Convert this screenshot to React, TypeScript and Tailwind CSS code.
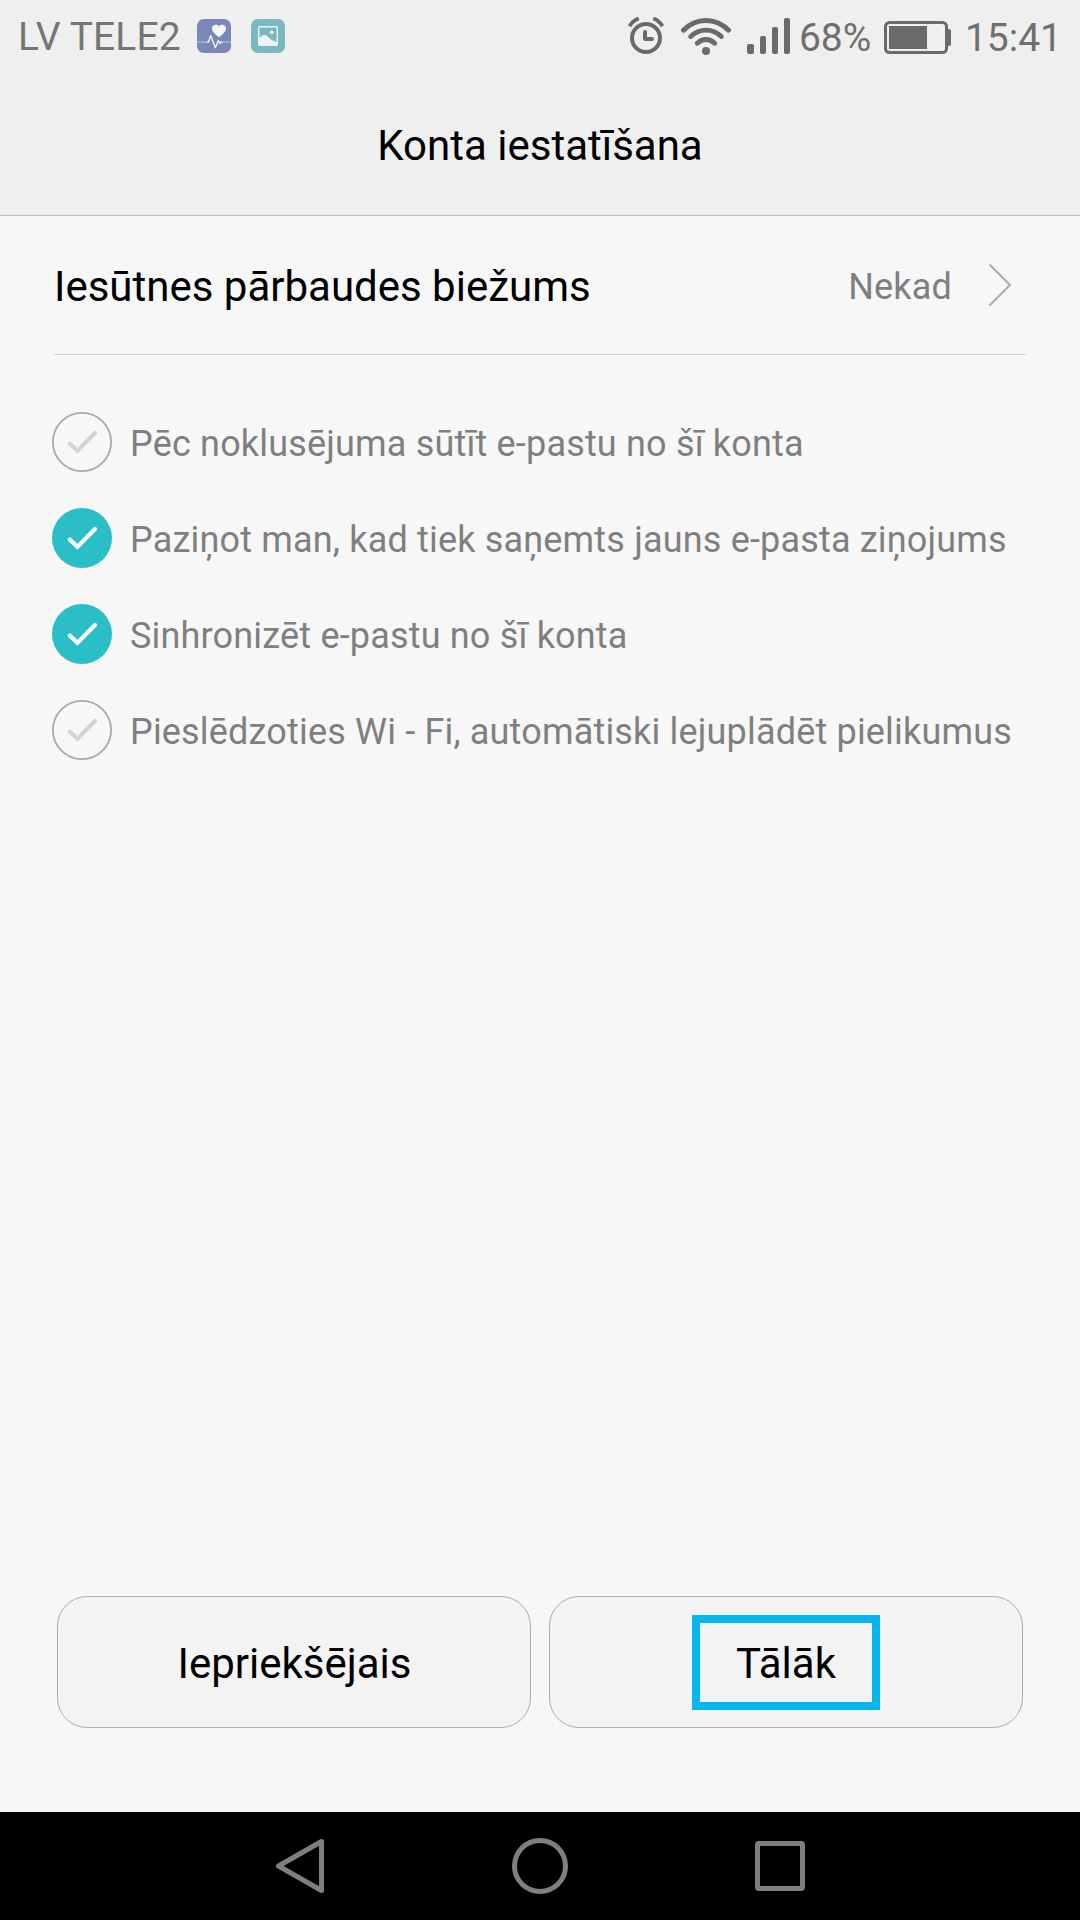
function HealthIcon() {
  return (
    <svg className="h-[34px] w-[34px]" viewBox="0 0 34 34" fill="none">
      <rect width="34" height="34" rx="7" fill="#7a88b8" />
      <path d="M0 23h10M25 23h9" stroke="#a9b3d3" strokeWidth="1.6" />
      <path d="M22 18.500c-3.500-3.200-7-5.500-7-9C15 5.200 20.300 4.700 22 7.200c1.700-2.500 7-2 7 2.300 0 3.500-3.500 5.800-7 9z" fill="#f6f6f8" />
      <path d="M10 23h1.500l2.200-6.500 4.600 12.200 3-7.200 1.600 3 1-1.500h1.500" stroke="#f0f1f6" strokeWidth="1.400" strokeLinejoin="round" />
    </svg>
  );
}

function GalleryIcon() {
  return (
    <svg className="h-[34px] w-[34px]" viewBox="0 0 34 34" fill="none">
      <rect width="34" height="34" rx="7" fill="#78b9bf" />
      <rect x="7.700" y="7.700" width="18.600" height="18.600" rx="1.200" stroke="#f0f4f4" strokeWidth="1.400" />
      <circle cx="20.700" cy="13.300" r="1.900" fill="#f0f4f4" />
      <path d="M8 19.500c2-2.500 4.500-4.500 7-3.200 2 1 3.500 3.500 6 5l5 2V26H8z" fill="#f0f4f4" />
    </svg>
  );
}

function AlarmIcon() {
  return (
    <svg className="mb-px h-[37px] w-[36px]" viewBox="0 0 36 37" fill="none" stroke="#6a6a6a">
      <circle cx="18" cy="21" r="14" strokeWidth="4" />
      <path d="M17 15v6.900h7" strokeWidth="4" strokeLinejoin="round" strokeLinecap="round" />
      <path d="M1.500 9.200C3.600 5.600 6.700 2.900 10.800 1.500M34.500 9.200C32.400 5.600 29.300 2.900 25.200 1.500" strokeWidth="3.800" />
    </svg>
  );
}

function WifiIcon() {
  return (
    <svg className="mt-px h-[37px] w-[50px]" viewBox="0 0 50 37" fill="none" stroke="#6a6a6a" strokeWidth="4.900" strokeLinecap="round">
      <path d="M2.500 12.200C15-.800 35-.800 47.500 12.200" />
      <path d="M9.700 18.500C18.500 10 31.500 10 40.300 18.500" />
      <path d="M16.300 25.200C21.500 20.200 28.500 20.200 33.700 25.200" />
      <circle cx="25" cy="33" r="4" fill="#6a6a6a" stroke="none" />
    </svg>
  );
}

function SignalIcon() {
  return (
    <svg className="h-[36px] w-[43px]" viewBox="0 0 43 36" fill="#6a6a6a">
      <rect x="0" y="26" width="7" height="10" rx="2" />
      <rect x="13" y="18" width="6" height="18" rx="2" />
      <rect x="25" y="9" width="6" height="27" rx="2" />
      <rect x="37" y="0" width="6" height="36" rx="2" />
    </svg>
  );
}

function BatteryIcon() {
  return (
    <svg className="h-[33px] w-[67px]" viewBox="0 0 67 33" fill="none">
      <rect x="1.500" y="1.500" width="61" height="30" rx="4" stroke="#6a6a6a" strokeWidth="3" />
      <rect x="5" y="5" width="38" height="23" fill="#6a6a6a" />
      <path d="M63 8h2q2 0 2 2v13q0 2-2 2h-2z" fill="#6a6a6a" />
    </svg>
  );
}

function CheckCircle({ checked }: { checked: boolean }) {
  return (
    <svg className="h-[60px] w-[60px] shrink-0" viewBox="0 0 60 60" fill="none">
      {checked ? (
        <circle cx="30" cy="30" r="30" fill="#2abfc7" />
      ) : (
        <circle cx="30" cy="30" r="29.100" stroke="#a9a9a9" strokeWidth="1.800" />
      )}
      <path
        d="M17.800 31.500l7.600 7.400 17.600-17.900"
        stroke={checked ? "#ffffff" : "#d4d4d4"}
        strokeWidth="4.200"
        strokeLinecap="round"
      />
    </svg>
  );
}

const options = [
  { label: "Pēc noklusējuma sūtīt e-pastu no šī konta", checked: false },
  { label: "Paziņot man, kad tiek saņemts jauns e-pasta ziņojums", checked: true },
  { label: "Sinhronizēt e-pastu no šī konta", checked: true },
  { label: "Pieslēdzoties Wi - Fi, automātiski lejuplādēt pielikumus", checked: false },
];

export default function App() {
  return (
    <div className="flex h-[1920px] w-[1080px] flex-col overflow-hidden bg-[#f7f7f7] font-['Roboto',sans-serif] whitespace-nowrap text-black">
      <header className="flex h-[216px] shrink-0 flex-col border-b border-[#bdbdbd] bg-[#efefef]">
        <div className="flex h-[72px] items-center pl-[18px] text-[39px] leading-[72px] text-[#757575]">
          <span className="w-[179px] pt-[2px] tracking-[0.1px]">LV TELE2</span>
          <HealthIcon />
          <span className="w-5" />
          <GalleryIcon />
          <div className="ml-auto flex items-center pr-[18px] text-[#6f6f6f]">
            <AlarmIcon />
            <span className="w-[17px]" />
            <WifiIcon />
            <span className="w-4" />
            <SignalIcon />
            <span className="ml-[9px] w-[85px] pt-1">68%</span>
            <span className="pt-[3px]">
              <BatteryIcon />
            </span>
            <span className="ml-[14px] pt-1">15:41</span>
          </div>
        </div>
        <h1 className="flex h-[143px] items-center justify-center pt-[3px] text-[42px]">Konta iestatīšana</h1>
      </header>

      <main className="flex grow flex-col">
        <button className="mx-[54px] flex h-[139px] shrink-0 items-center border-b border-[#cfcfcf] text-left">
          <span className="pt-[2px] text-[42px]">Iesūtnes pārbaudes biežums</span>
          <span className="ml-auto pt-1 text-[36px] tracking-[0.18px] text-[#7f7f7f]">Nekad</span>
          <svg className="mr-[14px] ml-[36px] h-[44px] w-[24px]" viewBox="0 0 24 44" fill="none">
            <path d="M1.500 1.500l20.500 20.500-20.500 20.500" stroke="#ababab" strokeWidth="2" />
          </svg>
        </button>

        <div className="mt-[57px] ml-[52px] flex flex-col gap-9">
          {options.map((o) => (
            <label key={o.label} className="flex h-[60px] items-center">
              <CheckCircle checked={o.checked} />
              <span className="ml-[18px] pt-1 text-[36px] tracking-[0.18px] text-[#7f7f7f]">{o.label}</span>
            </label>
          ))}
        </div>

        <div className="mx-[57px] mt-auto mb-[84px] grid h-[132px] grid-cols-2 gap-[18px] text-[42px]">
          <button className="flex items-center justify-center rounded-[30px] border border-[#adadad] bg-[#f3f3f3] pt-[2px] pl-px">Iepriekšējais</button>
          <button className="flex items-center justify-center rounded-[30px] border border-[#adadad] bg-[#f3f3f3]">
            <span className="flex h-[95px] w-[188px] items-center justify-center border-8 border-[#05b7ed] pt-[3px]">Tālāk</span>
          </button>
        </div>
      </main>

      <nav className="flex h-[108px] shrink-0 items-center justify-between bg-black pr-[272px] pl-[273px]">
        <svg className="h-[56px] w-[54px]" viewBox="0 0 54 56" fill="none">
          <path d="M48.500 3.500v49L5.500 28z" stroke="#7f7f7f" strokeWidth="5" strokeLinejoin="round" />
        </svg>
        <svg className="h-[56px] w-[56px]" viewBox="0 0 56 56" fill="none">
          <circle cx="28" cy="28" r="25.500" stroke="#7f7f7f" strokeWidth="5" />
        </svg>
        <svg className="h-[56px] w-[56px]" viewBox="0 0 56 56" fill="none">
          <rect x="5.500" y="5.500" width="45" height="45" rx="1.500" stroke="#7f7f7f" strokeWidth="5" />
        </svg>
      </nav>
    </div>
  );
}
